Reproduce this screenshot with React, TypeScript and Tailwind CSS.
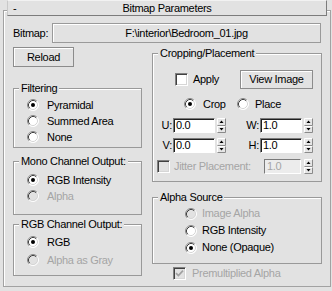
import type { ReactNode } from 'react';

// classic sunken radio button
function Radio({ on, disabled }: { on?: boolean; disabled?: boolean }) {
  return (
    <svg width="12" height="12" viewBox="0 0 12 12" className="shrink-0">
      <circle cx="6" cy="6" r="5.5" fill={disabled ? '#e2e2e2' : '#fff'} />
      <path d="M9.89 2.11 A5.5 5.5 0 0 0 2.11 9.89" fill="none" stroke="#8a8a8a" />
      <path d="M9.89 2.11 A5.5 5.5 0 0 1 2.11 9.89" fill="none" stroke="#fff" />
      <path d="M9.18 2.82 A4.5 4.5 0 0 0 2.82 9.18" fill="none" stroke="#404040" />
      <path d="M9.18 2.82 A4.5 4.5 0 0 1 2.82 9.18" fill="none" stroke="#d6d6d6" />
      {on && <circle cx="6" cy="6" r="2" fill="#000" />}
    </svg>
  );
}

function Check({ on, disabled }: { on?: boolean; disabled?: boolean }) {
  return (
    <span
      className={`flex h-[13px] w-[13px] shrink-0 items-center justify-center border border-t-[#808080] border-l-[#808080] border-b-white border-r-white shadow-[inset_1px_1px_0_#404040,inset_-1px_-1px_0_#d6d6d6] ${
        disabled ? 'bg-[#e2e2e2]' : 'bg-white'
      }`}
    >
      {on && (
        <svg width="9" height="9" viewBox="0 0 9 9">
          <path d="M1 4.2 L3.4 6.6 L8 1.6" stroke={disabled ? '#a0a0a0' : '#000'} strokeWidth="1.7" fill="none" />
        </svg>
      )}
    </span>
  );
}

function Spinner({ className = '' }: { className?: string }) {
  return (
    <svg width="9" height="15" viewBox="0 0 9 15" className={`shrink-0 ${className}`}>
      <rect x="0" y="0" width="9" height="15" fill="#e6e6e6" />
      <path d="M0.5 6.5 V0.5 H8.5" stroke="#fff" fill="none" />
      <path d="M8.5 0.5 V7.5 H0.5" stroke="#8a8a8a" fill="none" />
      <path d="M0.5 14.5 V8.5 H8.5" stroke="#fff" fill="none" />
      <path d="M8.5 8.5 V14.5 H0.5" stroke="#8a8a8a" fill="none" />
      <path d="M2.5 5 H6.5 L4.5 2.5 Z" fill="#000" />
      <path d="M2.5 10 H6.5 L4.5 12.5 Z" fill="#000" />
    </svg>
  );
}

function NumField({ value, width, disabled, className = '' }: { value: string; width: string; disabled?: boolean; className?: string }) {
  return (
    <div
      className={`flex h-[15px] items-center border border-t-[#7a7a7a] border-l-[#7a7a7a] border-b-white border-r-white pl-[2px] ${
        disabled
          ? 'bg-[#ececec] text-[#a5a5a5]'
          : 'bg-white shadow-[inset_1px_1px_0_#202020]'
      } ${width} ${className}`}
    >
      {value}
    </div>
  );
}

function Group({ title, className = '', children }: { title: string; className?: string; children: ReactNode }) {
  return (
    <fieldset className={`min-w-0 border border-[#999] shadow-[inset_1px_1px_0_#fff] ${className}`}>
      <legend className="ml-[5px] bg-[#e2e2e2] px-[2px] leading-[12px]">{title}</legend>
      {children}
    </fieldset>
  );
}

function RadioRow({
  label,
  on,
  disabled,
  className = '',
}: {
  label: string;
  on?: boolean;
  disabled?: boolean;
  className?: string;
}) {
  return (
    <div className={`flex items-center ${className}`}>
      <Radio on={on} disabled={disabled} />
      <span className={disabled ? 'text-[#a5a5a5]' : ''}>{label}</span>
    </div>
  );
}

export default function App() {
  return (
    <div className="h-[291px] w-[332px] overflow-hidden bg-[#e2e2e2] font-['Liberation_Sans',Arial,sans-serif] text-[11px] leading-[13px] tracking-[-0.3px] text-black">
      {/* rollout title */}
      <div className="relative z-10 ml-[7px] flex h-[16px] w-[320px] items-center border border-t-[#f2f2f2] border-l-[#c8c8c8] border-b-[#7c7c7c] border-r-[#7c7c7c] bg-[#e2e2e2]">
        <span className="w-[24px] pl-[5px]">-</span>
        <span className="flex-1 text-center">Bitmap Parameters</span>
        <span className="w-[24px]" />
      </div>

      <div className="-mt-[6px] h-[277px] w-[328px] ml-[3px] border border-[#a2a2a2] pl-[9px] pt-[12px] shadow-[inset_1px_1px_0_#fff]">
        <div className="flex h-[20px] items-center">
          <span className="w-[39px]">Bitmap:</span>
          <div className="flex h-[20px] w-[269px] items-center justify-center border border-[#9a9a9a] shadow-[inset_1px_1px_0_#fff]">
            {'F:\\interior\\Bedroom_01.jpg'}
          </div>
        </div>

        <div className="flex">
          {/* left column */}
          <div className="flex w-[129px] flex-col">
            <button className="mt-[4px] h-[20px] w-[61px] border border-[#8c8c8c] shadow-[inset_1px_1px_0_#fff]">
              Reload
            </button>
            <Group title="Filtering" className="mt-[15px] h-[66px] pt-[3px]">
              <RadioRow on label="Pyramidal" className="h-[16px] gap-[8px] pl-[13px]" />
              <RadioRow label="Summed Area" className="h-[16px] gap-[8px] pl-[13px]" />
              <RadioRow label="None" className="h-[16px] gap-[8px] pl-[13px]" />
            </Group>
            <Group title="Mono Channel Output:" className="mt-[7px] h-[60px] pt-[5px]">
              <RadioRow on label="RGB Intensity" className="h-[16px] gap-[8px] pl-[13px]" />
              <RadioRow disabled label="Alpha" className="h-[16px] gap-[8px] pl-[13px]" />
            </Group>
            <Group title="RGB Channel Output:" className="mt-[3px] h-[58px] pt-[3px]">
              <RadioRow on label="RGB" className="h-[18px] gap-[8px] pl-[13px]" />
              <RadioRow disabled label="Alpha as Gray" className="h-[18px] gap-[8px] pl-[13px]" />
            </Group>
          </div>

          {/* right column */}
          <div className="ml-[10px] flex w-[170px] flex-col">
            <Group title="Cropping/Placement" className="mt-[4px] h-[135px] pt-[11px]">
              <div className="flex h-[19px] items-center pl-[22px] pr-[8px]">
                <Check />
                <span className="ml-[5px]">Apply</span>
                <button className="ml-auto h-[19px] w-[73px] border border-[#8c8c8c] shadow-[inset_1px_1px_0_#fff]">
                  View Image
                </button>
              </div>
              <div className="mt-[8px] flex h-[14px] items-center pl-[31px]">
                <div className="flex w-[53px] items-center gap-[7px]">
                  <Radio on />
                  <span>Crop</span>
                </div>
                <div className="flex items-center gap-[6px]">
                  <Radio />
                  <span>Place</span>
                </div>
              </div>
              <div className="mt-[7px] flex h-[15px] items-center pl-[4px] pr-[8px]">
                <span className="w-[16px] pr-[1px] text-right">U:</span>
                <NumField value="0.0" width="w-[42px]" />
                <Spinner className="ml-[2px]" />
                <span className="ml-auto pr-[1px]">W:</span>
                <NumField value="1.0" width="w-[42px]" />
                <Spinner className="ml-[2px]" />
              </div>
              <div className="mt-[5px] flex h-[15px] items-center pl-[4px] pr-[8px]">
                <span className="w-[16px] pr-[1px] text-right">V:</span>
                <NumField value="0.0" width="w-[42px]" />
                <Spinner className="ml-[2px]" />
                <span className="ml-auto pr-[1px]">H:</span>
                <NumField value="1.0" width="w-[42px]" />
                <Spinner className="ml-[2px]" />
              </div>
              <div className="mt-[6px] flex h-[15px] items-center pl-[4px] pr-[8px]">
                <Check disabled />
                <span className="ml-[4px] text-[#a5a5a5]">Jitter Placement:</span>
                <NumField disabled value="1.0" width="w-[37px]" className="ml-auto" />
                <Spinner className="ml-[3px]" />
              </div>
            </Group>

            <Group title="Alpha Source" className="mt-[9px] h-[73px] pt-[2px]">
              <RadioRow disabled label="Image Alpha" className="h-[17px] gap-[5px] pl-[32px]" />
              <RadioRow label="RGB Intensity" className="h-[17px] gap-[5px] pl-[32px]" />
              <RadioRow on label="None (Opaque)" className="h-[17px] gap-[5px] pl-[32px]" />
            </Group>

            <div className="mt-[3px] flex h-[13px] items-center pl-[21px]">
              <Check on disabled />
              <span className="ml-[6px] text-[#a5a5a5]">Premultiplied Alpha</span>
            </div>
          </div>
        </div>
      </div>
    </div>
  );
}
